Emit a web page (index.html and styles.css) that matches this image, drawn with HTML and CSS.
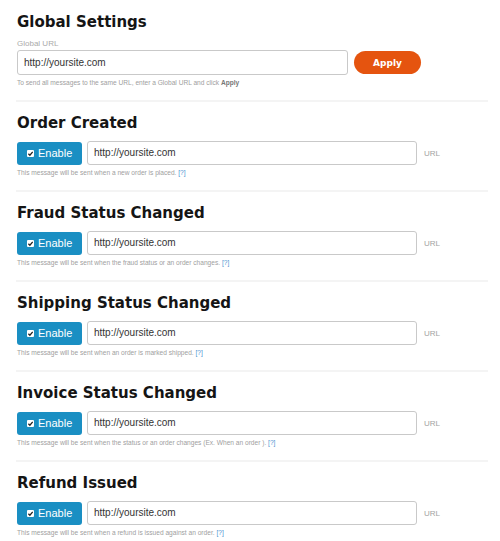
FILE: index.html
```html
<!DOCTYPE html>
<html>
<head>
<meta charset="utf-8">
<link rel="stylesheet" href="styles.css">
</head>
<body>
<div class="page">
  <section class="sec sec-global">
    <h2 class="title">Global Settings</h2>
    <div class="label">Global URL</div>
    <div class="row">
      <div class="input input-global">http://yoursite.com</div>
      <button class="apply">Apply</button>
    </div>
    <p class="help">To send all messages to the same URL, enter a Global URL and click <b>Apply</b></p>
  </section>

  <section class="sec">
    <h2 class="title">Order Created</h2>
    <div class="row">
      <button class="enable"><span class="chk"><svg viewBox="0 0 8 8" width="8" height="8"><path d="M1.6 4.2 L3.3 5.9 L6.5 2.2" fill="none" stroke="#222" stroke-width="1.5"/></svg></span>Enable</button>
      <div class="input">http://yoursite.com</div>
      <span class="url">URL</span>
    </div>
    <p class="help">This message will be sent when a new order is placed. <a class="q">[?]</a></p>
  </section>

  <section class="sec">
    <h2 class="title">Fraud Status Changed</h2>
    <div class="row">
      <button class="enable"><span class="chk"><svg viewBox="0 0 8 8" width="8" height="8"><path d="M1.6 4.2 L3.3 5.9 L6.5 2.2" fill="none" stroke="#222" stroke-width="1.5"/></svg></span>Enable</button>
      <div class="input">http://yoursite.com</div>
      <span class="url">URL</span>
    </div>
    <p class="help">This message will be sent when the fraud status or an order changes. <a class="q">[?]</a></p>
  </section>

  <section class="sec">
    <h2 class="title">Shipping Status Changed</h2>
    <div class="row">
      <button class="enable"><span class="chk"><svg viewBox="0 0 8 8" width="8" height="8"><path d="M1.6 4.2 L3.3 5.9 L6.5 2.2" fill="none" stroke="#222" stroke-width="1.5"/></svg></span>Enable</button>
      <div class="input">http://yoursite.com</div>
      <span class="url">URL</span>
    </div>
    <p class="help">This message will be sent when an order is marked shipped. <a class="q">[?]</a></p>
  </section>

  <section class="sec">
    <h2 class="title">Invoice Status Changed</h2>
    <div class="row">
      <button class="enable"><span class="chk"><svg viewBox="0 0 8 8" width="8" height="8"><path d="M1.6 4.2 L3.3 5.9 L6.5 2.2" fill="none" stroke="#222" stroke-width="1.5"/></svg></span>Enable</button>
      <div class="input">http://yoursite.com</div>
      <span class="url">URL</span>
    </div>
    <p class="help">This message will be sent when the status or an order changes (Ex. When an order ). <a class="q">[?]</a></p>
  </section>

  <section class="sec last">
    <h2 class="title">Refund Issued</h2>
    <div class="row">
      <button class="enable"><span class="chk"><svg viewBox="0 0 8 8" width="8" height="8"><path d="M1.6 4.2 L3.3 5.9 L6.5 2.2" fill="none" stroke="#222" stroke-width="1.5"/></svg></span>Enable</button>
      <div class="input">http://yoursite.com</div>
      <span class="url">URL</span>
    </div>
    <p class="help">This message will be sent when a refund is issued against an order. <a class="q">[?]</a></p>
  </section>
</div>
</body>
</html>
```

FILE: styles.css
```css
html, body {
  margin: 0;
  padding: 0;
  background: #fff;
}
body {
  font-family: "Liberation Sans", Arial, sans-serif;
  color: #333;
}
.page {
  width: 472px;
  margin-left: 16px;
}
.sec {
  padding: 11px 0 12px 1px;
  border-bottom: 2px solid #f4f4f4;
}
.sec-global {
  padding-top: 12px;
}
.last {
  border-bottom: none;
}
.title {
  margin: 0;
  font-family: "DejaVu Sans", sans-serif;
  font-weight: 700;
  font-size: 15px;
  line-height: 20px;
  color: #151515;
}
.label {
  margin-top: 7px;
  margin-bottom: 1px;
  font-size: 8px;
  line-height: 10px;
  color: #aaa;
}
.row {
  display: flex;
  align-items: center;
  margin-top: 8px;
  height: 24px;
}
.sec-global .row {
  margin-top: 0;
  height: 25px;
}
.input {
  box-sizing: border-box;
  width: 330px;
  height: 24px;
  border: 1px solid #c9c9c9;
  border-radius: 3px;
  padding-left: 6px;
  font-size: 10px;
  line-height: 22px;
  color: #333;
}
.input-global {
  width: 331px;
  height: 25px;
  line-height: 23px;
}
.apply {
  margin-left: 6px;
  width: 67px;
  height: 23px;
  border: none;
  border-radius: 12px;
  background: #e5540f;
  color: #fff;
  font-family: "DejaVu Sans", sans-serif;
  font-weight: 700;
  font-size: 9px;
  padding: 0;
}
.enable {
  box-sizing: border-box;
  display: flex;
  align-items: center;
  margin-right: 5px;
  width: 65px;
  height: 23px;
  border: none;
  border-radius: 3px;
  background: #1a8fc3;
  color: #fff;
  font-family: "Liberation Sans", Arial, sans-serif;
  font-size: 11px;
  padding: 0 0 0 10px;
}
.chk {
  display: inline-flex;
  width: 7px;
  height: 7px;
  background: #fff;
  border-radius: 1px;
  margin-right: 4px;
  align-items: center;
  justify-content: center;
  overflow: hidden;
}
.chk svg {
  display: block;
  width: 7px;
  height: 7px;
}
.url {
  margin-left: 7px;
  font-size: 8px;
  color: #a3a3a3;
}
.help {
  margin: 3px 0 0;
  font-size: 6.6px;
  line-height: 10px;
  color: #a0a0a0;
}
.help b {
  font-weight: 700;
  color: #777;
}
.q {
  color: #4a90d0;
}
```
